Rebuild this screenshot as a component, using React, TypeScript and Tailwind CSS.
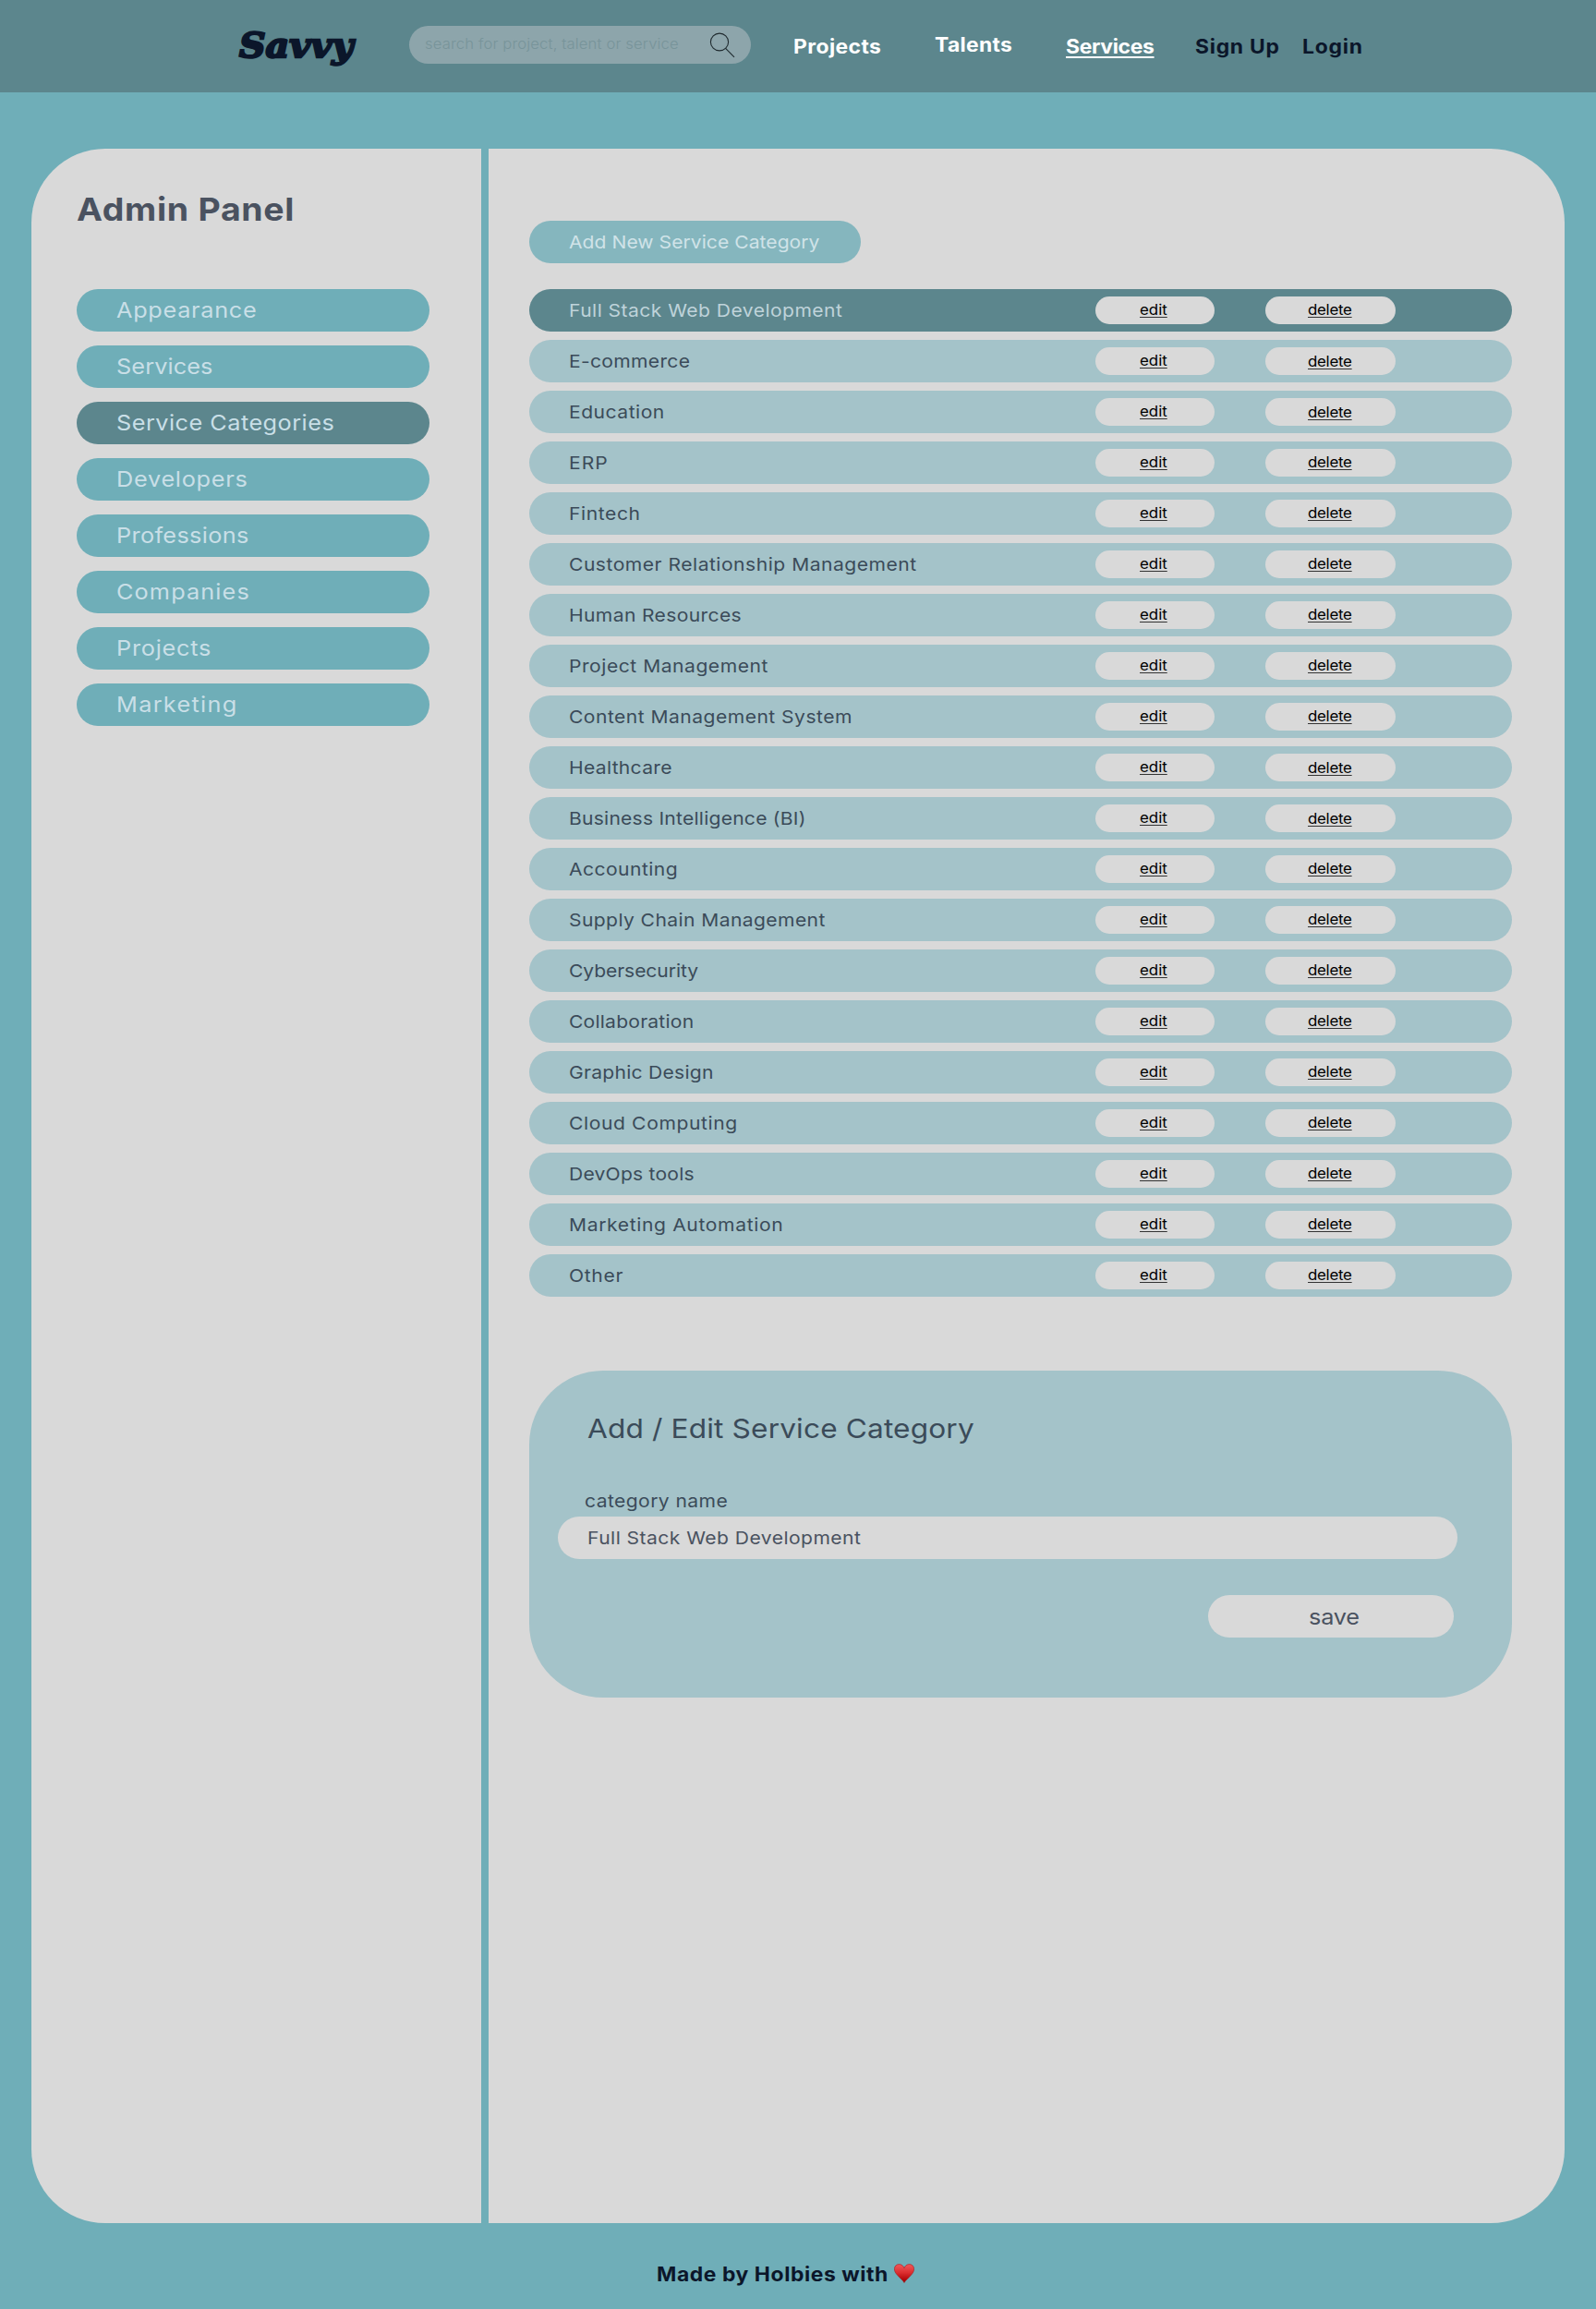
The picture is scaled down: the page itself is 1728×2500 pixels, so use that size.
import React from "react";

type Item = { label: string; tracking: string; low?: boolean };

const sidebar: Item[] = [
  { label: "Appearance", tracking: "tracking-[0.64px]" },
  { label: "Services", tracking: "tracking-[0.08px]" },
  { label: "Service Categories", tracking: "tracking-[0.43px]" },
  { label: "Developers", tracking: "tracking-[0.66px]" },
  { label: "Professions", tracking: "tracking-[0.3px]" },
  { label: "Companies", tracking: "tracking-[1.02px]" },
  { label: "Projects", tracking: "tracking-[0.7px]" },
  { label: "Marketing", tracking: "tracking-[1.19px]" },
];

const categories: Item[] = [
  { label: "Full Stack Web Development", tracking: "tracking-[0.41px]" },
  { label: "E-commerce", tracking: "tracking-[0.28px]", low: true },
  { label: "Education", tracking: "tracking-[0.46px]", low: true },
  { label: "ERP", tracking: "tracking-[0.95px]" },
  { label: "Fintech", tracking: "tracking-[0.53px]" },
  { label: "Customer Relationship Management", tracking: "tracking-[0.46px]" },
  { label: "Human Resources", tracking: "tracking-[0.33px]" },
  { label: "Project Management", tracking: "tracking-[0.48px]" },
  { label: "Content Management System", tracking: "tracking-[0.43px]" },
  { label: "Healthcare", tracking: "tracking-[0.28px]", low: true },
  { label: "Business Intelligence (BI)", tracking: "tracking-[0.21px]", low: true },
  { label: "Accounting", tracking: "tracking-[0.42px]" },
  { label: "Supply Chain Management", tracking: "tracking-[0.37px]" },
  { label: "Cybersecurity", tracking: "tracking-[-0.07px]" },
  { label: "Collaboration", tracking: "tracking-[0.2px]" },
  { label: "Graphic Design", tracking: "tracking-[0.24px]" },
  { label: "Cloud Computing", tracking: "tracking-[0.56px]" },
  { label: "DevOps tools", tracking: "tracking-[0.2px]" },
  { label: "Marketing Automation", tracking: "tracking-[0.58px]" },
  { label: "Other", tracking: "tracking-[0.6px]" },
];

function Wide({ className = "", bold = false, children }: { className?: string; bold?: boolean; children: React.ReactNode }) {
  return (
    <span
      className={`inline-block origin-left whitespace-nowrap ${bold ? "scale-x-[1.08]" : "scale-x-[1.095]"} ${className}`}
    >
      {children}
    </span>
  );
}

function Header() {
  return (
    <header className="flex h-[100px] items-center bg-[#5c868d] pl-[259px] text-[21.2px] font-bold text-white">
      <a className="w-[184px] shrink-0 pb-px font-['DejaVu_Serif',serif] text-[37px] leading-none font-bold text-[#0b162a] italic">
        <span className="inline-block origin-left scale-x-[1.07] [-webkit-text-stroke:2.4px_#0b162a]">
          Savvy
        </span>
      </a>
      <div className="-mt-[3px] flex h-[41px] w-[370px] shrink-0 items-center justify-between rounded-full bg-[#8da5ab] pr-[17px] pl-[17px]">
        <Wide bold className="pb-[2px] text-[15.4px] font-light tracking-[0.13px] text-[#78949a]">
          search for project, talent or service
        </Wide>
        <svg width="28" height="28" viewBox="0 0 28 28" fill="none" stroke="#1f2a2e" strokeWidth="1.1">
          <ellipse cx="11" cy="10.5" rx="9.6" ry="9.4" />
          <path d="M17.6 17.4 L27 26.8" />
        </svg>
      </div>
      <nav className="flex items-center pt-[2px] pl-[46px]">
        <a className="w-[153px]">
          <Wide bold className="tracking-[0.39px]">Projects</Wide>
        </a>
        <a className="w-[142px] pb-1">
          <Wide bold className="tracking-[0.3px]">Talents</Wide>
        </a>
        <a className="w-[140px]">
          <Wide bold className="tracking-[-0.3px] underline decoration-[1.5px] underline-offset-[3px]">Services</Wide>
        </a>
        <a className="w-[116px] text-[#0b162a]">
          <Wide bold className="tracking-[0.68px]">Sign Up</Wide>
        </a>
        <a className="text-[#0b162a]">
          <Wide bold className="tracking-[0.7px]">Login</Wide>
        </a>
      </nav>
    </header>
  );
}

function Sidebar() {
  return (
    <aside className="w-[487px] shrink-0 rounded-l-[80px] bg-[#d9d9d9] pl-[49px]">
      <h1 className="mt-[41px] h-[48px] text-[34.7px] leading-[48px] font-bold text-[#4a5260]">
        <Wide bold className="tracking-[0.64px]">Admin Panel</Wide>
      </h1>
      <ul className="mt-[63px] flex w-[382px] flex-col gap-[15px]">
        {sidebar.map(({ label, tracking }) => (
          <li
            key={label}
            className={`flex h-[46px] items-center rounded-full pl-[43px] text-[23.1px] text-[#c9dfe7] ${
              label === "Service Categories" ? "bg-[#5c868d]" : "bg-[#6faeb8]"
            }`}
          >
            <Wide className={tracking}>{label}</Wide>
          </li>
        ))}
      </ul>
    </aside>
  );
}

function CategoryRow({ item, active }: { item: Item; active: boolean }) {
  return (
    <li
      className={`flex h-[46px] items-center rounded-full pl-[43px] ${
        active ? "bg-[#5c868d] text-[#bfd3da]" : "bg-[#a4c3c9] text-[#3b4b59]"
      }`}
    >
      <span className="w-[570px] text-[19.25px]">
        <Wide className={item.tracking}>{item.label}</Wide>
      </span>
      <button className="flex h-[30px] w-[129px] items-center rounded-full bg-[#d9d9d9] pl-[48px] text-[15.4px] text-black">
        <Wide className="underline decoration-[#333] decoration-1 underline-offset-2">edit</Wide>
      </button>
      <button
        className={`ml-[55px] flex h-[30px] w-[141px] items-center rounded-full bg-[#d9d9d9] pl-[46px] text-[15.4px] text-black ${
          item.low ? "pt-[2px]" : ""
        }`}
      >
        <Wide className="tracking-[-0.24px] underline decoration-[#333] decoration-1 underline-offset-2">delete</Wide>
      </button>
    </li>
  );
}

function CategoryForm() {
  return (
    <section className="mt-[80px] h-[354px] w-[1064px] rounded-[80px] bg-[#a4c3c9] pt-[40px] pl-[31px] text-[#3b4b59]">
      <h2 className="pl-[32px] text-[28.9px] leading-[45px]">
        <Wide className="tracking-[0.13px]">Add / Edit Service Category</Wide>
      </h2>
      <div className="mt-[44px] pl-[29px] text-[19.25px] leading-[24px]">
        <Wide className="tracking-[0.38px]">category name</Wide>
      </div>
      <div className="mt-[5px] flex h-[46px] w-[974px] items-center rounded-full bg-[#d9d9d9] pl-[32px] text-[19.25px] text-[#4a5260]">
        <Wide className="tracking-[0.41px]">Full Stack Web Development</Wide>
      </div>
      <button className="mt-[39px] ml-[704px] flex h-[46px] w-[266px] items-center rounded-full bg-[#d9d9d9] pt-[2px] pl-[109px] text-[23.1px] text-[#4a5260]">
        <Wide className="tracking-[-0.2px]">save</Wide>
      </button>
    </section>
  );
}

export default function App() {
  return (
    <div className="flex h-[2500px] w-[1728px] flex-col bg-[#6faeb8] font-['Inter',sans-serif]">
      <Header />
      <div className="mt-[61px] ml-[34px] flex h-[2246px] w-[1660px] shrink-0 gap-2">
        <Sidebar />
        <main className="flex-1 rounded-r-[80px] bg-[#d9d9d9] pt-[78px] pl-[44px]">
          <button className="flex h-[46px] w-[359px] items-center rounded-full bg-[#85b6be] pl-[43px] text-[19.25px] text-[#d0e3e8]">
            <Wide className="tracking-[0.04px]">Add New Service Category</Wide>
          </button>
          <ul className="mt-7 flex w-[1064px] flex-col gap-[9px]">
            {categories.map((item, i) => (
              <CategoryRow key={item.label} item={item} active={i === 0} />
            ))}
          </ul>
          <CategoryForm />
        </main>
      </div>
      <footer className="mt-[40px] flex h-[32px] items-center pl-[711px] text-[21.2px] font-bold text-[#0b162a]">
        <span className="w-[257px]">
          <Wide bold className="tracking-[0.53px]">Made by Holbies with</Wide>
        </span>
        <svg width="22" height="21" viewBox="0 0 22 21" className="-mt-[4px]">
          <defs>
            <linearGradient id="heart" x1="0" y1="0" x2="0" y2="1">
              <stop offset="0" stopColor="#f0595b" />
              <stop offset="0.45" stopColor="#dc2f30" />
              <stop offset="0.85" stopColor="#b00508" />
              <stop offset="1" stopColor="#8f0205" />
            </linearGradient>
          </defs>
          <path
            d="M11 20.5 C9.5 18 6.5 15.6 3.8 12.6 C1.6 10.1 0.4 8.2 0.4 5.7 C0.4 2.7 2.6 0.6 5.4 0.6 C8 0.6 10.3 2.3 11 4.8 C11.7 2.3 14 0.6 16.6 0.6 C19.4 0.6 21.6 2.7 21.6 5.7 C21.6 8.2 20.4 10.1 18.2 12.6 C15.5 15.6 12.5 18 11 20.5 Z"
            fill="url(#heart)"
            stroke="#a31c20"
            strokeWidth="0.6"
          />
        </svg>
      </footer>
    </div>
  );
}
